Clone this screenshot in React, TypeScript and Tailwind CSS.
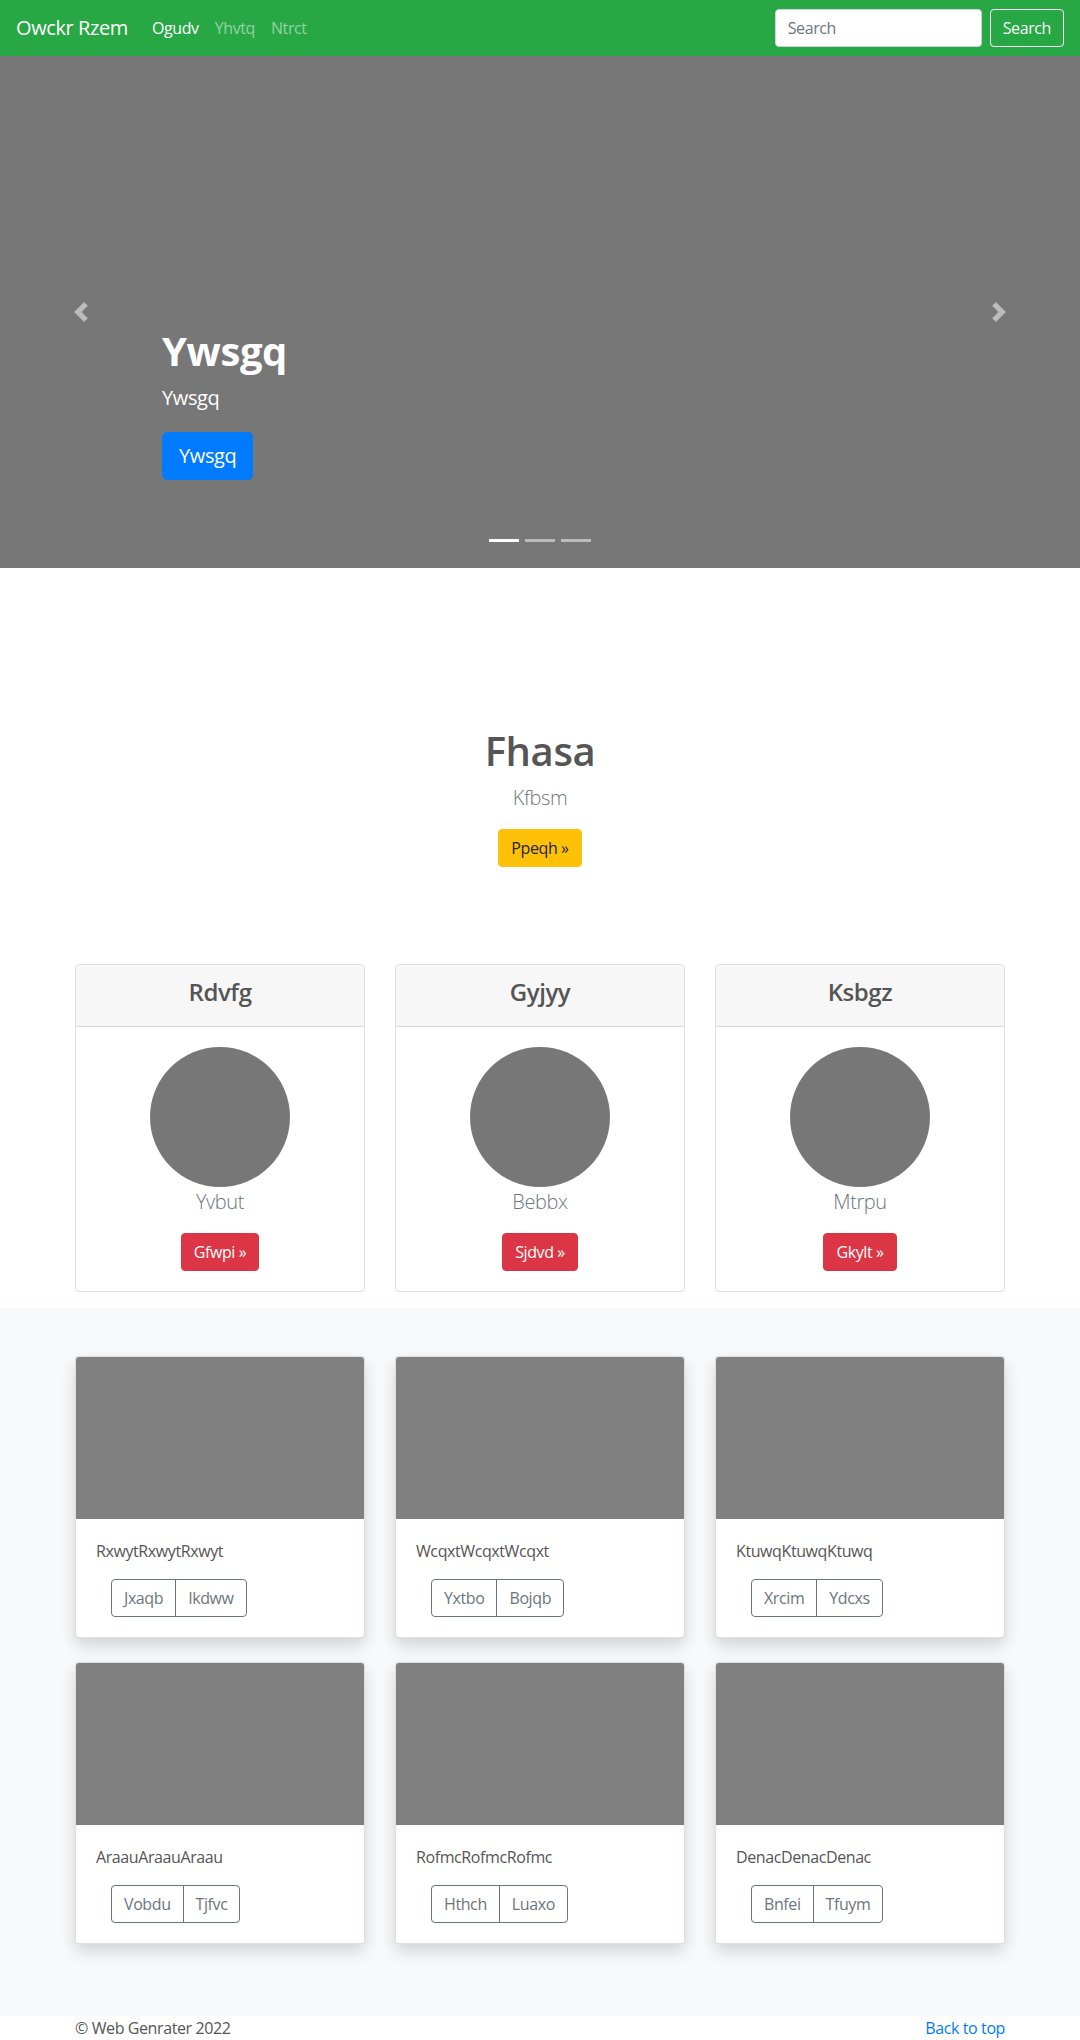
const prevPath = "M5.25 0l-4 4 4 4 1.5-1.5L4.25 4l2.5-2.5L5.25 0z";
const nextPath = "M2.75 0l-1.5 1.5L3.75 4l-2.5 2.5L2.75 8l4-4-4-4z";

const pricing = [
  { title: "Rdvfg", sub: "Yvbut", btn: "Gfwpi" },
  { title: "Gyjyy", sub: "Bebbx", btn: "Sjdvd" },
  { title: "Ksbgz", sub: "Mtrpu", btn: "Gkylt" },
];

const album = [
  { text: "RxwytRxwytRxwyt", a: "Jxaqb", b: "Ikdww" },
  { text: "WcqxtWcqxtWcqxt", a: "Yxtbo", b: "Bojqb" },
  { text: "KtuwqKtuwqKtuwq", a: "Xrcim", b: "Ydcxs" },
  { text: "AraauAraauAraau", a: "Vobdu", b: "Tjfvc" },
  { text: "RofmcRofmcRofmc", a: "Hthch", b: "Luaxo" },
  { text: "DenacDenacDenac", a: "Bnfei", b: "Tfuym" },
];

function Chevron({ d }: { d: string }) {
  return (
    <svg viewBox="0 0 8 8" className="w-5 h-5" fill="#fff">
      <path d={d} />
    </svg>
  );
}

export default function App() {
  return (
    <div className="font-['Open_Sans','Noto_Sans',sans-serif] tracking-[-0.025em] text-[#555] text-base leading-6 bg-white">
      {/* navbar */}
      <nav className="h-14 bg-[#28a745] px-4 flex items-center">
        <a className="text-white text-[20px] leading-[30px] mr-4">Owckr Rzem</a>
        <ul className="flex">
          <li><a className="block px-2 py-2 text-white">Ogudv</a></li>
          <li><a className="block px-2 py-2 text-white/50">Yhvtq</a></li>
          <li><a className="block px-2 py-2 text-white/50">Ntrct</a></li>
        </ul>
        <form className="ml-auto flex items-center gap-2">
          <input
            type="text"
            placeholder="Search"
            className="w-[207px] h-[38px] rounded bg-white border border-[#ced4da] px-3 text-[#495057] placeholder:text-[#6c757d] outline-none"
          />
          <button type="button" className="h-[38px] px-3 rounded border border-[#f8f9fa] text-[#f8f9fa]">Search</button>
        </form>
      </nav>

      {/* carousel */}
      <div className="relative h-[512px] bg-[#777]">
        <div className="absolute inset-y-0 left-0 w-[15%] flex items-center justify-center opacity-50">
          <Chevron d={prevPath} />
        </div>
        <div className="absolute inset-y-0 right-0 w-[15%] flex items-center justify-center opacity-50">
          <Chevron d={nextPath} />
        </div>
        <div className="absolute left-[15%] right-[15%] bottom-[88px] text-white text-left">
          <h1 className="text-[40px] leading-[48px] font-bold mb-2">Ywsgq</h1>
          <p className="text-[20px] leading-[30px] mb-[19px]">Ywsgq</p>
          <a className="inline-block bg-[#007bff] text-white text-[20px] leading-[30px] px-4 py-2 rounded-[5px] border border-[#007bff]">Ywsgq</a>
        </div>
        <ol className="absolute bottom-0 left-0 right-0 mx-[15%] mb-4 flex justify-center">
          <li className="w-[30px] h-[23px] mx-[3px] border-y-[10px] border-transparent bg-white bg-clip-padding"></li>
          <li className="w-[30px] h-[23px] mx-[3px] border-y-[10px] border-transparent bg-white bg-clip-padding opacity-50"></li>
          <li className="w-[30px] h-[23px] mx-[3px] border-y-[10px] border-transparent bg-white bg-clip-padding opacity-50"></li>
        </ol>
      </div>

      {/* intro */}
      <section className="pt-[159px] pb-[97px] text-center">
        <h1 className="text-[40px] leading-[48px] font-semibold mb-2 text-[#555]">Fhasa</h1>
        <p className="text-[20px] leading-[30px] font-light text-[#6c757d] mb-4">Kfbsm</p>
        <a className="inline-block bg-[#ffc107] text-[#212529] px-3 py-[6px] rounded border border-[#ffc107]">Ppeqh »</a>
      </section>

      {/* pricing cards */}
      <div className="w-[930px] mx-auto grid grid-cols-3 gap-[30px] mb-4 text-center">
        {pricing.map((c) => (
          <div key={c.title} className="border border-black/[0.125] rounded flex flex-col">
            <div className="bg-black/[0.03] border-b border-black/[0.125] px-5 py-3 rounded-t">
              <h4 className="text-[24px] leading-[29px] font-semibold mb-2 text-[#555]">{c.title}</h4>
            </div>
            <div className="p-5 flex flex-col items-center">
              <div className="w-[140px] h-[140px] rounded-full bg-[#777]"></div>
              <p className="text-[20px] leading-[30px] font-light text-[#6c757d] mb-4">{c.sub}</p>
              <a className="inline-block bg-[#dc3545] text-white px-3 py-[6px] rounded border border-[#dc3545]">{c.btn} »</a>
            </div>
          </div>
        ))}
      </div>

      {/* album */}
      <section className="bg-[#f8f9fa] py-12">
        <div className="w-[930px] mx-auto grid grid-cols-3 gap-x-[30px]">
          {album.map((c) => (
            <div key={c.text} className="mb-6 bg-white border border-black/[0.125] rounded overflow-hidden shadow-[0_8px_16px_rgba(0,0,0,0.15)]">
              <div className="h-[162px] bg-[#808080]"></div>
              <div className="p-5">
                <p className="mb-4 text-[#555]">{c.text}</p>
                <div className="ml-[15px] inline-flex">
                  <button type="button" className="h-[38px] px-3 border border-[#6c757d] text-[#6c757d] rounded-l">{c.a}</button>
                  <button type="button" className="h-[38px] px-3 border border-[#6c757d] -ml-px text-[#6c757d] rounded-r">{c.b}</button>
                </div>
              </div>
            </div>
          ))}
        </div>
      </section>

      {/* footer */}
      <footer className="w-[930px] mx-auto flex justify-between">
        <p className="mb-4">© Web Genrater 2022</p>
        <p className="mb-4"><a className="text-[#007bff]">Back to top</a></p>
      </footer>
    </div>
  );
}
